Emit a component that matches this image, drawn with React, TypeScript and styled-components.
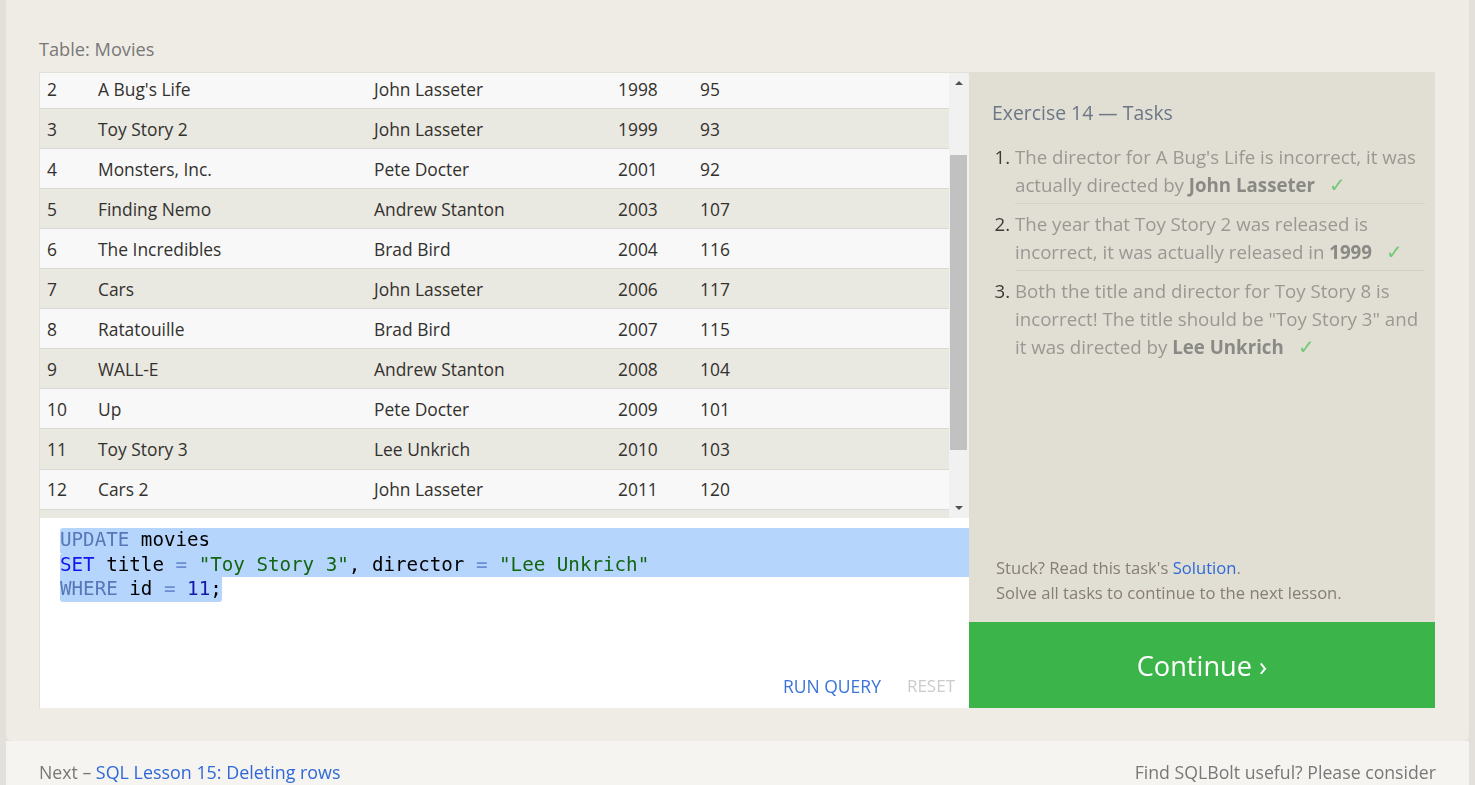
import React, { useLayoutEffect, useRef } from "react";
import styled, { createGlobalStyle } from "styled-components";

const GlobalStyle = createGlobalStyle`
  html, body { margin: 0; padding: 0; background: #e3e0dc; }
  body { font-family: "Open Sans", "Noto Sans", sans-serif; }
  * { box-sizing: border-box; }
`;

type Movie = { id: number; title: string; director: string; year: number; length: number };

const movies: Movie[] = [
  { id: 1, title: "Toy Story", director: "John Lasseter", year: 1995, length: 81 },
  { id: 2, title: "A Bug's Life", director: "John Lasseter", year: 1998, length: 95 },
  { id: 3, title: "Toy Story 2", director: "John Lasseter", year: 1999, length: 93 },
  { id: 4, title: "Monsters, Inc.", director: "Pete Docter", year: 2001, length: 92 },
  { id: 5, title: "Finding Nemo", director: "Andrew Stanton", year: 2003, length: 107 },
  { id: 6, title: "The Incredibles", director: "Brad Bird", year: 2004, length: 116 },
  { id: 7, title: "Cars", director: "John Lasseter", year: 2006, length: 117 },
  { id: 8, title: "Ratatouille", director: "Brad Bird", year: 2007, length: 115 },
  { id: 9, title: "WALL-E", director: "Andrew Stanton", year: 2008, length: 104 },
  { id: 10, title: "Up", director: "Pete Docter", year: 2009, length: 101 },
  { id: 11, title: "Toy Story 3", director: "Lee Unkrich", year: 2010, length: 103 },
  { id: 12, title: "Cars 2", director: "John Lasseter", year: 2011, length: 120 },
  { id: 13, title: "Brave", director: "Brenda Chapman", year: 2012, length: 102 },
  { id: 14, title: "Monsters University", director: "Dan Scanlon", year: 2013, length: 110 },
];

const HEADER_H = 50;
const ROW_H = 40.05;
const VIEW_H = 445;
const SCROLL_TOP = 94;
const TRACK_H = VIEW_H - 40;
const CONTENT_H = HEADER_H + movies.length * ROW_H;

const Page = styled.div`
  margin: 0 6px;
`;

const Card = styled.div`
  background: #efece5;
  padding: 36px 34px 33px 33px;
  border-radius: 0 0 6px 6px;
`;

const TableLabel = styled.div`
  font-size: 18.2px;
  line-height: 26px;
  color: #787878;
  margin-bottom: 10px;
`;

const Workspace = styled.div`
  display: grid;
  grid-template-columns: 1fr 466px;
`;

const LeftCol = styled.div`
  display: flex;
  flex-direction: column;
`;

const TableBox = styled.div`
  display: flex;
  height: ${VIEW_H + 1}px;
  border-top: 1px solid #e3e0d9;
  border-left: 1px solid #e3e0d9;
  background: #f8f8f8;
`;

const RowsViewport = styled.div`
  flex: 1;
  overflow-y: scroll;
  scrollbar-width: none;
  &::-webkit-scrollbar { display: none; }
`;

const Row = styled.div<{ $shade: boolean; $header?: boolean }>`
  display: grid;
  grid-template-columns: 51px 276px 244px 82px 1fr;
  align-items: center;
  height: ${(p) => (p.$header ? HEADER_H : ROW_H)}px;
  border-bottom: 1px solid #dcdad4;
  background: ${(p) => (p.$header ? "#f8f8f8" : p.$shade ? "#e9e8e1" : "#f8f8f8")};
  font-size: 17.4px;
  font-weight: ${(p) => (p.$header ? 600 : 400)};
  color: #33312e;
`;

const Cell = styled.div`
  padding-left: 7px;
  white-space: nowrap;
`;

const ScrollBar = styled.div`
  width: 20px;
  display: flex;
  flex-direction: column;
  background: #f1f1f1;
`;

const ArrowButton = styled.div`
  height: 20px;
  display: flex;
  align-items: center;
  justify-content: center;
`;

const Triangle = styled.span<{ $down?: boolean }>`
  width: 0;
  height: 0;
  border-left: 4px solid transparent;
  border-right: 4px solid transparent;
  ${(p) => (p.$down ? "border-top: 4px solid #505050;" : "border-bottom: 4px solid #505050;")}
`;

const Track = styled.div`
  flex: 1;
  display: flex;
  flex-direction: column;
`;

const Thumb = styled.div`
  margin: 0 2px 0 1px;
  background: #c1c1c1;
`;

const Editor = styled.div`
  height: 190px;
  background: #ffffff;
  border-left: 1px solid #e3e0d9;
  display: flex;
  flex-direction: column;
  padding-top: 10px;
`;

const Code = styled.div`
  padding-left: 20px;
  font-family: "DejaVu Sans Mono", "Liberation Mono", monospace;
  font-size: 19.2px;
  line-height: 24.5px;
  color: #000;
`;

const CodeLine = styled.div<{ $selected?: boolean }>`
  height: 24.5px;
  white-space: pre;
  background: ${(p) => (p.$selected ? "#b5d5fc" : "transparent")};
  border-radius: ${(p) => (p.$selected ? "3px 0 0 0" : "0")};
`;

const Selection = styled.span`
  display: inline-block;
  height: 24.5px;
  background: #b5d5fc;
  border-radius: 0 0 3px 3px;
`;

const Tok = styled.span<{ $kind: "kw" | "kw2" | "op" | "str" | "num" }>`
  color: ${(p) =>
    ({ kw: "#5877b9", kw2: "#1414f0", op: "#6a8cd2", str: "#126612", num: "#1515a8" }[p.$kind])};
`;

const Actions = styled.div`
  margin-top: auto;
  display: flex;
  justify-content: flex-end;
  gap: 26px;
  padding: 0 14px 10px 0;
  font-size: 17px;
  line-height: 24px;
`;

const ActionButton = styled.span<{ $disabled?: boolean }>`
  color: ${(p) => (p.$disabled ? "#cbcbcb" : "#3a74db")};
  font-size: ${(p) => (p.$disabled ? "17px" : "17.5px")};
  text-transform: uppercase;
`;

const RightCol = styled.div`
  display: flex;
  flex-direction: column;
`;

const TasksPanel = styled.div`
  flex: 1;
  background: #e1dfd4;
  padding: 28px 10px 17px 23px;
  display: flex;
  flex-direction: column;
`;

const Heading = styled.h3`
  margin: 0 0 11px;
  font-size: 19.4px;
  font-weight: 400;
  line-height: 26px;
  color: #6c7686;
`;

const TaskList = styled.ol`
  margin: 0;
  padding-left: 23px;
`;

const Task = styled.li`
  font-size: 18.7px;
  line-height: 28px;
  color: #9a9893;
  padding: 6px 0 4px;
  border-bottom: 1px solid #d4d1c6;
  &:last-child { border-bottom: none; }
  &::marker { color: #3d3b38; }
`;

const Strong = styled.strong`
  font-weight: 700;
  color: #8a8985;
`;

const Check = styled.span`
  margin-left: 14px;
  font-size: 20px;
  color: #76c878;
`;

const Stuck = styled.div`
  margin-top: auto;
  padding-left: 4px;
  font-size: 16.6px;
  line-height: 25px;
  color: #877d73;
`;

const Link = styled.a`
  color: #2f68d8;
  text-decoration: none;
`;

const ContinueButton = styled.div`
  height: 86px;
  background: #3bb54a;
  color: #ffffff;
  font-size: 27.2px;
  display: flex;
  align-items: center;
  justify-content: center;
`;

const Footer = styled.div`
  display: flex;
  justify-content: space-between;
  padding: 17px 33px 0 33px;
  background: #f5f4f0;
  font-size: 17.7px;
  line-height: 28px;
  color: #787878;
  height: 60px;
`;

const NextLink = styled(Link)`
  font-size: 17.9px;
`;

export default function App() {
  const viewRef = useRef<HTMLDivElement>(null);
  useLayoutEffect(() => {
    if (viewRef.current) viewRef.current.scrollTop = SCROLL_TOP;
  }, []);

  const thumbTop = (TRACK_H * SCROLL_TOP) / CONTENT_H;
  const thumbH = (TRACK_H * VIEW_H) / CONTENT_H;

  return (
    <>
      <GlobalStyle />
      <Page>
        <Card>
          <TableLabel>Table: Movies</TableLabel>
          <Workspace>
            <LeftCol>
              <TableBox>
                <RowsViewport ref={viewRef}>
                  <Row $shade={false} $header>
                    <Cell>Id</Cell>
                    <Cell>Title</Cell>
                    <Cell>Director</Cell>
                    <Cell>Year</Cell>
                    <Cell>Length_minutes</Cell>
                  </Row>
                  {movies.map((m) => (
                    <Row key={m.id} $shade={m.id % 2 === 1}>
                      <Cell>{m.id}</Cell>
                      <Cell>{m.title}</Cell>
                      <Cell>{m.director}</Cell>
                      <Cell>{m.year}</Cell>
                      <Cell>{m.length}</Cell>
                    </Row>
                  ))}
                </RowsViewport>
                <ScrollBar>
                  <ArrowButton>
                    <Triangle />
                  </ArrowButton>
                  <Track>
                    <Thumb style={{ marginTop: thumbTop, height: thumbH }} />
                  </Track>
                  <ArrowButton>
                    <Triangle $down />
                  </ArrowButton>
                </ScrollBar>
              </TableBox>
              <Editor>
                <Code>
                  <CodeLine $selected>
                    <Tok $kind="kw">UPDATE</Tok> movies
                  </CodeLine>
                  <CodeLine $selected>
                    <Tok $kind="kw2">SET</Tok> title <Tok $kind="op">=</Tok>{" "}
                    <Tok $kind="str">"Toy Story 3"</Tok>, director <Tok $kind="op">=</Tok>{" "}
                    <Tok $kind="str">"Lee Unkrich"</Tok>
                  </CodeLine>
                  <CodeLine>
                    <Selection>
                      <Tok $kind="kw">WHERE</Tok> id <Tok $kind="op">=</Tok> <Tok $kind="num">11</Tok>;
                    </Selection>
                  </CodeLine>
                </Code>
                <Actions>
                  <ActionButton>Run query</ActionButton>
                  <ActionButton $disabled>Reset</ActionButton>
                </Actions>
              </Editor>
            </LeftCol>
            <RightCol>
              <TasksPanel>
                <Heading>Exercise 14 — Tasks</Heading>
                <TaskList>
                  <Task>
                    The director for A Bug's Life is incorrect, it was actually directed by{" "}
                    <Strong>John Lasseter</Strong>
                    <Check>✓</Check>
                  </Task>
                  <Task>
                    The year that Toy Story 2 was released is incorrect, it was actually released in{" "}
                    <Strong>1999</Strong>
                    <Check>✓</Check>
                  </Task>
                  <Task>
                    Both the title and director for Toy Story 8 is incorrect! The title should be "Toy
                    Story 3" and it was directed by <Strong>Lee Unkrich</Strong>
                    <Check>✓</Check>
                  </Task>
                </TaskList>
                <Stuck>
                  Stuck? Read this task's <Link href="#">Solution</Link>.
                  <br />
                  Solve all tasks to continue to the next lesson.
                </Stuck>
              </TasksPanel>
              <ContinueButton>Continue ›</ContinueButton>
            </RightCol>
          </Workspace>
        </Card>
        <Footer>
          <span>
            Next – <NextLink href="#">SQL Lesson 15: Deleting rows</NextLink>
          </span>
          <span>Find SQLBolt useful? Please consider</span>
        </Footer>
      </Page>
    </>
  );
}
